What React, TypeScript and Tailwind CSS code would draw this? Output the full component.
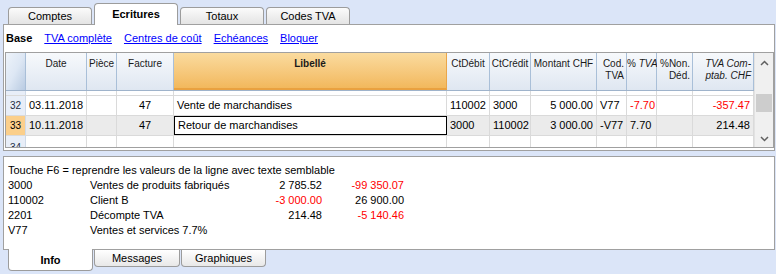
import React from 'react';

type Col = { w: number; label: React.ReactNode; align: 'left' | 'center' | 'right' };

const cols: Col[] = [
  { w: 61, label: 'Date', align: 'center' },
  { w: 30, label: 'Pièce', align: 'center' },
  { w: 57, label: 'Facture', align: 'center' },
  { w: 273, label: <b>Libellé</b>, align: 'center' },
  { w: 43, label: 'CtDébit', align: 'center' },
  { w: 41, label: 'CtCrédit', align: 'center' },
  { w: 66, label: 'Montant CHF', align: 'center' },
  { w: 30, label: <>Cod.<br />TVA</>, align: 'right' },
  { w: 30, label: <>% <i>TVA</i></>, align: 'right' },
  { w: 36, label: <>%Non.<br />Déd.</>, align: 'right' },
  { w: 61, label: <i>TVA Com-<br />ptab. CHF</i>, align: 'right' },
];

type Cell = { v: string; align?: 'left' | 'center' | 'right'; red?: boolean };

const rows: { n: string; cells: Cell[]; current?: boolean }[] = [
  {
    n: '32',
    cells: [
      { v: '03.11.2018' },
      { v: '' },
      { v: '47', align: 'center' },
      { v: 'Vente de marchandises' },
      { v: '110002' },
      { v: '3000' },
      { v: '5 000.00', align: 'right' },
      { v: 'V77' },
      { v: '-7.70', red: true },
      { v: '' },
      { v: '-357.47', align: 'right', red: true },
    ],
  },
  {
    n: '33',
    current: true,
    cells: [
      { v: '10.11.2018' },
      { v: '' },
      { v: '47', align: 'center' },
      { v: 'Retour de marchandises' },
      { v: '3000' },
      { v: '110002' },
      { v: '3 000.00', align: 'right' },
      { v: '-V77' },
      { v: '7.70' },
      { v: '' },
      { v: '214.48', align: 'right' },
    ],
  },
];

const alignCls = {
  left: 'justify-start text-left',
  center: 'justify-center text-center',
  right: 'justify-end text-right',
};

function Tab({ label, active, bottom, w }: { label: string; active?: boolean; bottom?: boolean; w: number }) {
  if (bottom) {
    return (
      <div
        style={{ width: w }}
        className={
          'flex items-center justify-center border border-t-0 border-[#9c9c9c] rounded-b-[4px] text-[11px] ' +
          (active ? 'h-[22px] pt-[1px] bg-white font-bold relative z-10 -mt-px' : 'h-[17px] bg-gradient-to-b from-[#ffffff] to-[#e8e8e8]')
        }
      >
        {label}
      </div>
    );
  }
  return (
    <div
      style={{ width: w }}
      className={
        'flex items-center justify-center border border-b-0 border-[#9c9c9c] rounded-t-[4px] text-[11px] ' +
        (active
          ? 'h-[22px] bg-white font-bold relative z-10 -mb-px'
          : 'h-[17px] bg-gradient-to-b from-[#fbfbfb] to-[#e4e4e4]')
      }
    >
      {label}
    </div>
  );
}

function Grid() {
  return (
    <div className="flex ml-px h-[96px] border border-[#a0a0a0] overflow-hidden">
      <div className="flex flex-col">
        {/* header */}
        <div className="flex shrink-0 h-[38px] border-b border-[#9fb3cb]">
          <div className="w-[20px] bg-gradient-to-br from-[#eef3fa] via-[#dde7f4] to-[#b9cbe2] border-r border-[#a9bfd8]" />
          {cols.map((c, i) => (
            <div
              key={i}
              style={{ width: c.w }}
              className={
                'border-r text-[10px] leading-[12px] pt-[5px] whitespace-nowrap text-[#1a1a1a] ' +
                (i === 3
                  ? 'bg-gradient-to-b from-[#fadb9e] to-[#f2b85c] border-[#eaa64a] border-b-2 border-b-[#e9a140] text-center'
                  : 'bg-gradient-to-b from-[#f7f9fc] to-[#dfe7f1] border-[#a9bfd8] ') +
                (i === 3 ? '' : c.align === 'right' ? ' text-right pr-[2px]' : ' text-center')
              }
            >
              {c.label}
            </div>
          ))}
        </div>
        {/* partial row 31 */}
        <div className="flex shrink-0 h-[5px] border-b border-[#dadada]">
          <div className="w-[20px] bg-[#e8eef8] border-r border-[#cfdae8]" />
          {cols.map((c, i) => (
            <div key={i} style={{ width: c.w }} className="border-r border-[#dadada]" />
          ))}
        </div>
        {rows.map((r) => (
          <div key={r.n} className="flex shrink-0 h-[20px] border-b border-[#dadada] text-[11px]">
            <div
              className={
                'w-[20px] flex items-end pb-[2px] pl-[4px] text-[10px] border-r border-[#cfdae8] ' +
                (r.current ? 'bg-[#fbcf8b]' : 'bg-[#e8eef8] text-[#1e2c44]')
              }
            >
              {r.n}
            </div>
            {r.cells.map((cell, i) => {
              const sel = r.current && i === 3;
              return (
                <div
                  key={i}
                  style={{ width: cols[i].w }}
                  className={
                    'flex items-center px-[3px] whitespace-nowrap ' +
                    alignCls[cell.align ?? 'left'] +
                    (sel
                      ? ' border border-black bg-white'
                      : ' border-r border-[#dadada]' + (r.current ? ' bg-[#ebebeb]' : ' bg-white')) +
                    (cell.red ? ' text-[#ff0000]' : '')
                  }
                >
                  {cell.v}
                </div>
              );
            })}
          </div>
        ))}
        {/* partial row 34 */}
        <div className="flex shrink-0 h-[20px] text-[10px]">
          <div className="w-[20px] bg-[#e8eef8] border-r border-[#cfdae8] pl-[4px] pt-[6px] leading-[12px] text-[#1e2c44]">34</div>
          {cols.map((c, i) => (
            <div key={i} style={{ width: c.w }} className="border-r border-[#dadada]" />
          ))}
        </div>
      </div>
      {/* scrollbar */}
      <div className="w-[19px] flex flex-col bg-[#f0f0f0] border-l border-[#e2e2e2]">
        <div className="h-[19px] flex items-center justify-center">
          <svg width="9" height="6" viewBox="0 0 9 6">
            <path d="M1 5 L4.5 1.5 L8 5" fill="none" stroke="#606060" strokeWidth="1.5" />
          </svg>
        </div>
        <div className="h-[22px]" />
        <div className="h-[18px] mx-[1px] bg-[#cdcdcd]" />
        <div className="flex-1" />
        <div className="h-[17px] flex items-center justify-center">
          <svg width="9" height="6" viewBox="0 0 9 6">
            <path d="M1 1 L4.5 4.5 L8 1" fill="none" stroke="#606060" strokeWidth="1.5" />
          </svg>
        </div>
      </div>
    </div>
  );
}

const info: { code: string; label: string; a?: string; aRed?: boolean; b?: string; bRed?: boolean }[] = [
  { code: '3000', label: 'Ventes de produits fabriqués', a: '2 785.52', b: '-99 350.07', bRed: true },
  { code: '110002', label: 'Client B', a: '-3 000.00', aRed: true, b: '26 900.00' },
  { code: '2201', label: 'Décompte TVA', a: '214.48', b: '-5 140.46', bRed: true },
  { code: 'V77', label: 'Ventes et services 7.7%' },
];

export default function App() {
  return (
    <div
      className="w-[776px] h-[274px] bg-[#dbe5f8] overflow-hidden text-black"
      style={{ fontFamily: '"Liberation Sans", Arial, sans-serif' }}
    >
      <div className="flex items-end h-[24px] pl-[8px] gap-[2px]">
        <Tab label="Comptes" w={84} />
        <Tab label="Ecritures" w={84} active />
        <Tab label="Totaux" w={84} />
        <Tab label="Codes TVA" w={84} />
      </div>
      <div className="ml-[3px] w-[772px] h-[127px] border border-[#a0a0a0] bg-white">
        <div className="flex items-center h-[27px] gap-[12px] pl-[2px] text-[11px]">
          <span className="font-bold">Base</span>
          <span className="text-[#0000ff] underline">TVA complète</span>
          <span className="text-[#0000ff] underline">Centres de coût</span>
          <span className="text-[#0000ff] underline">Echéances</span>
          <span className="text-[#0000ff] underline">Bloquer</span>
        </div>
        <Grid />
      </div>
      <div className="mt-[5px] ml-[3px] w-[772px] h-[94px] border border-[#a0a0a0] bg-white px-[4px] pt-[6px] text-[11px] leading-[15px]">
        <div>Touche F6 = reprendre les valeurs de la ligne avec texte semblable</div>
        {info.map((r) => (
          <div key={r.code} className="flex whitespace-nowrap">
            <span className="w-[82px]">{r.code}</span>
            <span className="w-[150px]">{r.label}</span>
            <span className={'w-[82px] text-right' + (r.aRed ? ' text-[#ff0000]' : '')}>{r.a}</span>
            <span className={'w-[82px] text-right' + (r.bRed ? ' text-[#ff0000]' : '')}>{r.b}</span>
          </div>
        ))}
      </div>
      <div className="flex items-start pl-[8px] gap-[1px]">
        <Tab label="Info" w={85} active bottom />
        <Tab label="Messages" w={86} bottom />
        <Tab label="Graphiques" w={85} bottom />
      </div>
    </div>
  );
}
